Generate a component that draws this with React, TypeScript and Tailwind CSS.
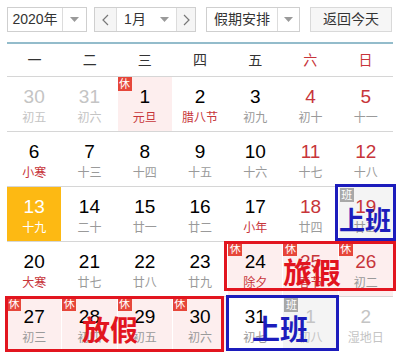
import React from 'react';

type Day = {
  n: number;
  l: string;
  other?: boolean;
  weekend?: boolean;
  fest?: boolean;
  rest?: boolean;
  work?: boolean;
  today?: boolean;
};

const rows: Day[][] = [
  [
    { n: 30, l: '初五', other: true },
    { n: 31, l: '初六', other: true },
    { n: 1, l: '元旦', fest: true, rest: true },
    { n: 2, l: '腊八节', fest: true },
    { n: 3, l: '初九' },
    { n: 4, l: '初十', weekend: true },
    { n: 5, l: '十一', weekend: true },
  ],
  [
    { n: 6, l: '小寒', fest: true },
    { n: 7, l: '十三' },
    { n: 8, l: '十四' },
    { n: 9, l: '十五' },
    { n: 10, l: '十六' },
    { n: 11, l: '十七', weekend: true },
    { n: 12, l: '十八', weekend: true },
  ],
  [
    { n: 13, l: '十九', today: true },
    { n: 14, l: '二十' },
    { n: 15, l: '廿一' },
    { n: 16, l: '廿二' },
    { n: 17, l: '小年', fest: true },
    { n: 18, l: '廿四', weekend: true },
    { n: 19, l: '廿五', weekend: true, work: true },
  ],
  [
    { n: 20, l: '大寒', fest: true },
    { n: 21, l: '廿七' },
    { n: 22, l: '廿八' },
    { n: 23, l: '廿九' },
    { n: 24, l: '除夕', fest: true, rest: true },
    { n: 25, l: '春节', fest: true, rest: true, weekend: true },
    { n: 26, l: '初二', rest: true, weekend: true },
  ],
  [
    { n: 27, l: '初三', rest: true },
    { n: 28, l: '初四', rest: true },
    { n: 29, l: '初五', rest: true },
    { n: 30, l: '初六', rest: true },
    { n: 31, l: '初七' },
    { n: 1, l: '初八', other: true, work: true },
    { n: 2, l: '湿地日', other: true },
  ],
];

const Caret = () => (
  <svg width="9" height="5" viewBox="0 0 9 5">
    <path d="M0 0 L9 0 L4.5 5 Z" fill="#9a9a9a" />
  </svg>
);

const Chevron = ({ dir }: { dir: 'l' | 'r' }) => (
  <svg width="7" height="12" viewBox="0 0 7 12">
    <polyline
      points={dir === 'l' ? '6,1 1,6 6,11' : '1,1 6,6 1,11'}
      fill="none"
      stroke="#777"
      strokeWidth="1.2"
    />
  </svg>
);

const Cell = ({ d }: { d: Day }) => {
  let bg = 'bg-white';
  if (d.today) bg = 'bg-[#fdb913]';
  else if (d.rest) bg = 'bg-[#fdeeee]';
  else if (d.work) bg = 'bg-[#f4f4f4]';

  let num = 'text-black';
  if (d.today) num = 'text-white';
  else if (d.other) num = 'text-[#c4c4c4]';
  else if (d.weekend) num = 'text-[#c7353a]';

  let lun = 'text-[#9a9a9a]';
  if (d.today) lun = 'text-white';
  else if (d.other && !d.fest) lun = 'text-[#c4c4c4]';
  else if (d.fest) lun = 'text-[#c7353a]';

  return (
    <div className={`relative h-[54px] flex flex-col items-center pt-[9px] ${bg}`}>
      {d.rest && (
        <span className="absolute left-0 top-0 w-[14px] h-[14px] bg-[#e6463a] text-white text-[11px] leading-[14px] text-center">
          休
        </span>
      )}
      {d.work && (
        <span className="absolute left-[1px] top-[1px] w-[14px] h-[14px] bg-[#a8a8a8] text-white text-[11px] leading-[14px] text-center">
          班
        </span>
      )}
      <span className={`text-[19px] leading-[22px] ${num}`}>{d.n}</span>
      <span className={`text-[12px] leading-[16px] mt-[2px] ${lun}`}>{d.l}</span>
    </div>
  );
};

export default function App() {
  const weekdays = ['一', '二', '三', '四', '五', '六', '日'];
  return (
    <div
      className="relative w-[400px] h-[358px] bg-white overflow-hidden"
      style={{ fontFamily: '"Liberation Sans", "Noto Sans CJK SC", sans-serif' }}
    >
      <div className="pt-[7px] px-[7px] flex items-center text-[14px] text-[#333]">
        <div className="flex h-[25px] w-[80px] border border-[#cfcfcf]">
          <div className="w-[54px] flex items-center justify-center">2020年</div>
          <div className="flex-1 flex items-center justify-center border-l border-[#dcdcdc]">
            <Caret />
          </div>
        </div>
        <div className="flex h-[25px] w-[102px] ml-[7px] border border-[#cfcfcf]">
          <div className="w-[22px] flex items-center justify-center bg-[#f5f5f5] border-r border-[#dcdcdc]">
            <Chevron dir="l" />
          </div>
          <div className="w-[59px] flex items-center justify-center gap-[14px]">
            <span>1月</span>
            <Caret />
          </div>
          <div className="flex-1 flex items-center justify-center bg-[#f5f5f5] border-l border-[#dcdcdc]">
            <Chevron dir="r" />
          </div>
        </div>
        <div className="flex h-[25px] w-[94px] ml-[10px] border border-[#cfcfcf]">
          <div className="w-[70px] flex items-center justify-center">假期安排</div>
          <div className="flex-1 flex items-center justify-center border-l border-[#dcdcdc]">
            <Caret />
          </div>
        </div>
        <div className="flex h-[25px] w-[82px] ml-[10px] border border-[#d9d9d9] bg-[#f6f6f6] items-center justify-center">
          返回今天
        </div>
      </div>

      <div className="mx-[7px] mt-[10px] border-t-2 border-[#93bccb]">
        <div className="grid grid-cols-7 h-[32px] items-center text-center text-[14px]">
          {weekdays.map((w, i) => (
            <span key={w} className={i >= 5 ? 'text-[#c7353a]' : 'text-[#333]'}>
              {w}
            </span>
          ))}
        </div>
        {rows.map((r, i) => (
          <div key={i} className="grid grid-cols-7 gap-x-px border-t border-[#d6d6d6]">
            {r.map((d, j) => (
              <Cell key={j} d={d} />
            ))}
          </div>
        ))}
      </div>

      {/* hand-drawn annotations */}
      <div className="absolute left-[224px] top-[241px] w-[172px] h-[50px] border-[3px] border-[#e2151f]" />
      <div className="absolute left-[5px] top-[296px] w-[219px] h-[56px] border-[3px] border-[#e2151f]" />
      <div className="absolute left-[335px] top-[184px] w-[61px] h-[57px] border-[3px] border-[#1c1cbc]" />
      <div className="absolute left-[226px] top-[295px] w-[113px] h-[56px] border-[3px] border-[#1c1cbc]" />

      <span className="absolute left-[283px] top-[256px] text-[29px] leading-[36px] font-bold text-[#e2151f]">旅假</span>
      <span className="absolute left-[82px] top-[314px] text-[28px] leading-[36px] font-bold text-[#e2151f]">放假</span>
      <span className="absolute left-[339px] top-[204px] text-[26px] leading-[34px] font-bold text-[#1c1cbc]">上班</span>
      <span className="absolute left-[252px] top-[313px] text-[28px] leading-[36px] font-bold text-[#1c1cbc]">上班</span>
    </div>
  );
}
